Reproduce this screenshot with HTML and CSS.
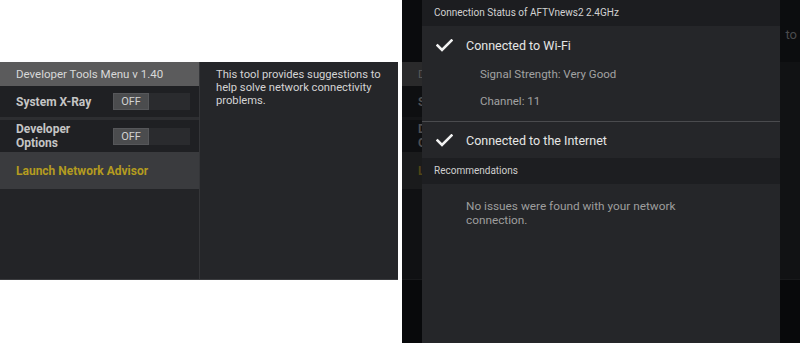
FILE: index.html
```html
<!DOCTYPE html>
<html>
<head>
<meta charset="utf-8">
<link rel="stylesheet" href="styles.css">
</head>
<body>
<div class="page">
  <section class="left">
    <div class="menu">
      <div class="menu-col">
        <div class="menu-title">Developer Tools Menu v 1.40</div>
        <div class="menu-row menu-row-1">
          <span class="menu-label">System X-Ray</span>
          <span class="toggle"><span class="toggle-btn">OFF</span></span>
        </div>
        <div class="menu-row menu-row-2">
          <span class="menu-label">Developer Options</span>
          <span class="toggle"><span class="toggle-btn">OFF</span></span>
        </div>
        <div class="menu-row menu-row-active">
          <span class="menu-label accent">Launch Network Advisor</span>
        </div>
      </div>
      <div class="menu-desc">This tool provides suggestions to help solve network connectivity problems.</div>
    </div>
  </section>

  <section class="screen">
    <div class="ghost">
      <div class="ghost-strip">
        <div class="g-top"></div>
        <div class="g-title">D</div>
        <div class="g-row g-row-1">S</div>
        <div class="g-row g-row-2">D<br>O</div>
        <div class="g-row g-row-active">L</div>
        <div class="g-rest"></div>
      </div>
      <div class="ghost-strip">
        <div class="g-top g-top-right"><span class="g-text">to</span></div>
        <div class="g-panel-right"></div>
      </div>
    </div>

    <div class="dialog">
      <div class="dlg-title">Connection Status of AFTVnews2 2.4GHz</div>
      <div class="dlg-item">
        <svg class="check" width="17" height="13" viewBox="0 0 17 13"><path d="M1.5 6.5 L6 11 L15.5 1.5" fill="none" stroke="#f2f2f2" stroke-width="2.6" stroke-linecap="square"/></svg>
        <span>Connected to Wi-Fi</span>
      </div>
      <div class="dlg-sub">Signal Strength: Very Good</div>
      <div class="dlg-sub dlg-sub-2">Channel: 11</div>
      <div class="dlg-sep"></div>
      <div class="dlg-item dlg-item-2">
        <svg class="check" width="17" height="13" viewBox="0 0 17 13"><path d="M1.5 6.5 L6 11 L15.5 1.5" fill="none" stroke="#f2f2f2" stroke-width="2.6" stroke-linecap="square"/></svg>
        <span>Connected to the Internet</span>
      </div>
      <div class="dlg-band">Recommendations</div>
      <div class="dlg-msg">No issues were found with your network connection.</div>
    </div>
  </section>
</div>
</body>
</html>
```

FILE: styles.css
```css
* { box-sizing: border-box; }
html, body { margin: 0; padding: 0; }
body {
  background: #ffffff;
  font-family: Roboto, "Noto Sans", "DejaVu Sans", sans-serif;
  width: 800px;
  height: 343px;
  overflow: hidden;
}
.page {
  display: flex;
  gap: 4px;
  height: 343px;
}

/* ---------- left: developer tools menu ---------- */
.left {
  width: 398px;
  padding-top: 62px;
  background: #ffffff;
}
.menu {
  display: flex;
  height: 218px;
  background: #232427;
  border-bottom: 1px solid #3b3c3f;
}
.menu-col {
  width: 200px;
  display: flex;
  flex-direction: column;
  background: #232427;
  border-right: 1px solid #343538;
}
.menu-title {
  height: 24px;
  line-height: 24px;
  background: #5b5b5c;
  color: #d8d8d8;
  font-size: 11.5px;
  padding-left: 16px;
  white-space: nowrap;
}
.menu-row {
  display: flex;
  align-items: center;
  padding-left: 16px;
  background: #1f2023;
}
.menu-row-1 {
  height: 34px;
  border-bottom: 3px solid #2d2e31;
}
.menu-row-2 {
  height: 32px;
}
.menu-row-active {
  height: 37px;
  background: #3a3b3e;
}
.menu-label {
  width: 97px;
  font-weight: bold;
  font-size: 12px;
  line-height: 14px;
  color: #c5c5c5;
}
.menu-label.accent {
  width: auto;
  color: #b49b20;
}
.toggle {
  width: 77px;
  height: 17px;
  background: #2a2b2e;
  display: flex;
}
.toggle-btn {
  width: 36px;
  height: 17px;
  background: #4b4c4e;
  border: 1px solid #56575a;
  color: #d2d2d2;
  font-size: 11px;
  line-height: 15px;
  text-align: center;
}
.menu-desc {
  flex: 1;
  background: #252629;
  color: #d4d4d4;
  font-size: 11.2px;
  line-height: 13px;
  padding: 6px 16px 0 16px;
}

/* ---------- right: TV screen with dialog ---------- */
.screen {
  position: relative;
  width: 398px;
  height: 343px;
  background: #08090b;
  overflow: hidden;
}
.ghost {
  display: flex;
  justify-content: space-between;
  height: 343px;
}
.ghost-strip {
  width: 20px;
  display: flex;
  flex-direction: column;
  font-size: 12px;
  color: #4e4f51;
}
.g-top {
  height: 62px;
  background: #0a0b0d;
}
.g-top-right {
  background: #0c0d0f;
  padding-top: 27px;
  text-align: right;
}
.g-text {
  display: block;
  color: #4a4b4d;
  font-size: 13px;
  line-height: 16px;
  white-space: nowrap;
  margin-right: 3px;
}
.g-title {
  height: 24px;
  line-height: 24px;
  background: #2a2a2b;
  padding-left: 16px;
  color: #58585a;
  font-size: 11.5px;
}
.g-row {
  padding-left: 16px;
  background: #0e0f11;
  display: flex;
  align-items: center;
  font-weight: bold;
  line-height: 14px;
}
.g-row-1 {
  height: 34px;
  border-bottom: 3px solid #141517;
}
.g-row-2 {
  height: 32px;
}
.g-row-active {
  height: 37px;
  background: #1a1b1c;
  color: #4f4516;
}
.g-rest {
  height: 91px;
  background: #101113;
  border-bottom: 1px solid #18191b;
}
.g-panel-right {
  height: 218px;
  background: #111214;
  border-bottom: 1px solid #18191b;
}
.dialog {
  position: absolute;
  left: 20px;
  top: 0;
  width: 358px;
  height: 343px;
  background: #252629;
  display: flex;
  flex-direction: column;
}
.dlg-title {
  height: 26px;
  line-height: 26px;
  background: #1c1d20;
  color: #d2d2d2;
  font-size: 10px;
  padding-left: 12px;
  white-space: nowrap;
}
.dlg-item {
  height: 38px;
  display: flex;
  align-items: center;
  padding-left: 14px;
  color: #e6e6e6;
  font-size: 12.5px;
}
.dlg-item .check {
  margin-right: 13px;
  flex: none;
}
.dlg-item-2 {
  height: 36px;
}
.dlg-sub {
  height: 20px;
  line-height: 20px;
  padding-left: 58px;
  color: #a2a2a2;
  font-size: 11.5px;
}
.dlg-sub-2 {
  margin-top: 7px;
}
.dlg-sep {
  margin-top: 10px;
  height: 1px;
  background: #4a4b4e;
}
.dlg-band {
  height: 26px;
  line-height: 26px;
  background: #1d1e21;
  color: #cfcfcf;
  font-size: 10px;
  padding-left: 12px;
}
.dlg-msg {
  padding: 16px 0 0 44px;
  width: 275px;
  color: #9e9e9e;
  font-size: 11.8px;
  line-height: 13.5px;
}
```
